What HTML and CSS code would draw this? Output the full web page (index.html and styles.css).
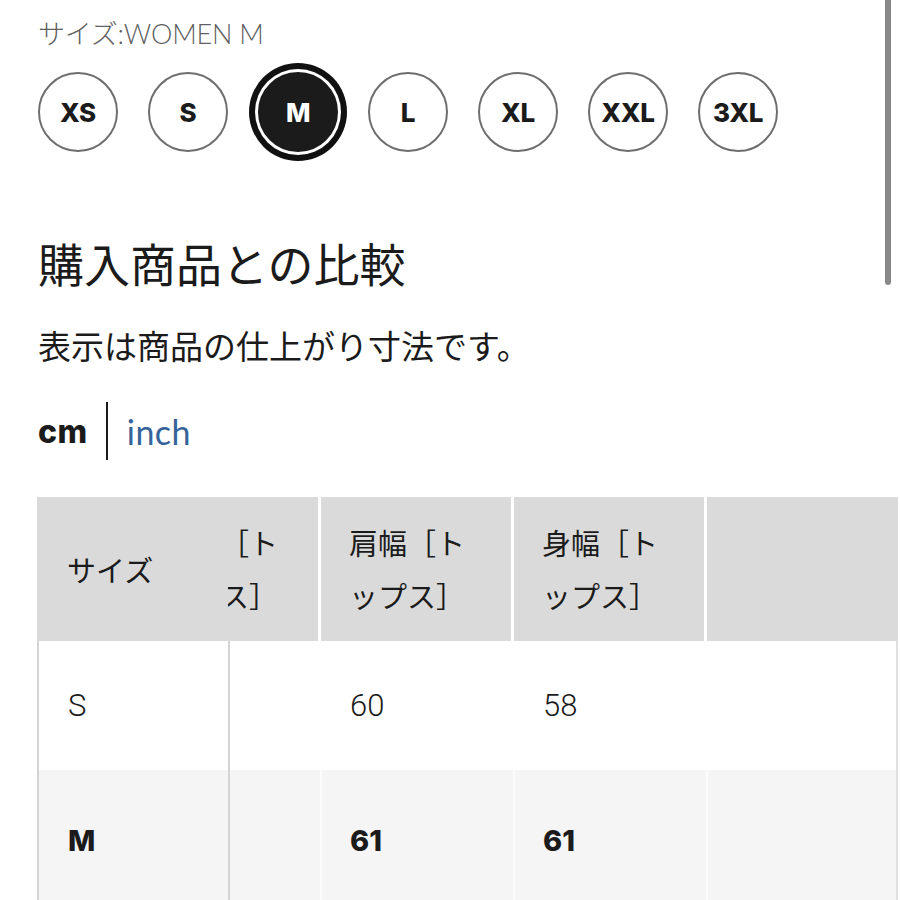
FILE: index.html
```html
<!DOCTYPE html>
<html lang="ja">
<head>
<meta charset="utf-8">
<title>サイズ比較</title>
<link rel="stylesheet" href="styles.css">
</head>
<body>
<div class="page">
  <div class="size-label">サイズ:WOMEN M</div>
  <div class="sizes">
    <span class="chip">XS</span>
    <span class="chip">S</span>
    <span class="chip chip-active">M</span>
    <span class="chip">L</span>
    <span class="chip">XL</span>
    <span class="chip">XXL</span>
    <span class="chip">3XL</span>
  </div>

  <h2 class="heading">購入商品との比較</h2>
  <p class="note">表示は商品の仕上がり寸法です。</p>

  <div class="units">
    <span class="unit unit-on">cm</span>
    <span class="unit-sep"></span>
    <span class="unit unit-off">inch</span>
  </div>

  <div class="table">
    <div class="row row-head">
      <div class="cell c1"><span>サイズ</span></div>
      <div class="cell c2"><div class="shifted">着丈［トップス］</div></div>
      <div class="cell c3 sep"><div class="wrap">肩幅［トップス］</div></div>
      <div class="cell c4 sep"><div class="wrap">身幅［トップス］</div></div>
      <div class="cell c5 sep"></div>
    </div>
    <div class="row row-body">
      <div class="cell c1 num">S</div>
      <div class="cell c2"></div>
      <div class="cell c3 num">60</div>
      <div class="cell c4 num">58</div>
      <div class="cell c5"></div>
    </div>
    <div class="row row-body row-current">
      <div class="cell c1 num">M</div>
      <div class="cell c2"></div>
      <div class="cell c3 sep num">61</div>
      <div class="cell c4 sep num">61</div>
      <div class="cell c5 sep"></div>
    </div>
  </div>
</div>
<div class="scrollbar"></div>
</body>
</html>
```

FILE: styles.css
```css
html, body {
  margin: 0;
  padding: 0;
  background: #ffffff;
}
body {
  font-family: "Noto Sans CJK JP", "Noto Sans", sans-serif;
  color: #1b1b1b;
  overflow: hidden;
  height: 900px;
}
.page {
  padding: 16px 0 0 38px;
}
.size-label {
  font-family: "Lato", "Noto Sans CJK JP", sans-serif;
  font-weight: 300;
  font-size: 27px;
  line-height: 36px;
  color: #5f5f5f;
  letter-spacing: -0.2px;
}
.sizes {
  display: flex;
  gap: 30px;
  margin-top: 20px;
}
.chip {
  width: 80px;
  height: 80px;
  box-sizing: border-box;
  border: 2px solid #6e6e6e;
  border-radius: 50%;
  display: flex;
  align-items: center;
  justify-content: center;
  font-family: "Inter", "Lato", sans-serif;
  font-weight: 800;
  font-size: 26px;
  letter-spacing: -0.3px;
  color: #1b1b1b;
}
.chip-active {
  background: #1b1b1b;
  border-color: #1b1b1b;
  color: #ffffff;
  box-shadow: 0 0 0 3px #ffffff, 0 0 0 9px #111111;
}
.heading {
  margin: 78px 0 0 0;
  font-weight: 400;
  font-size: 46px;
  line-height: 64px;
  color: #1b1b1b;
}
.note {
  margin: 28px 0 0 0;
  font-size: 33px;
  line-height: 46px;
  color: #1b1b1b;
}
.units {
  display: flex;
  align-items: center;
  height: 58px;
  margin-top: 34px;
}
.unit-on {
  font-family: "Inter", "Lato", sans-serif;
  font-weight: 800;
  font-size: 32px;
  color: #1b1b1b;
  letter-spacing: 0.5px;
}
.unit-sep {
  width: 2px;
  height: 58px;
  background: #1b1b1b;
  margin: 0 19px 0 18px;
}
.unit-off {
  font-family: "Lato", sans-serif;
  font-weight: 400;
  font-size: 34px;
  color: #35639a;
  letter-spacing: 0.5px;
}
.table {
  margin-top: 37px;
  margin-left: -1px;
  width: 861px;
}
.row {
  display: grid;
  grid-template-columns: 191px 90px 193px 193px 1fr;
}
.row-head {
  background: #dadada;
  height: 144px;
}
.row-body {
  height: 129px;
  background: #ffffff;
  border-left: 2px solid #d4d4d4;
  border-right: 2px solid #e0e0e0;
  box-sizing: border-box;
}
.row-current {
  background: #f5f5f5;
  height: 140px;
}
.cell {
  box-sizing: border-box;
  font-size: 29px;
  line-height: 53px;
  min-width: 0;
}
.row-head .c1 {
  display: flex;
  align-items: center;
  padding-left: 30px;
}
.row-head .c2 {
  overflow: hidden;
  padding-top: 19px;
}
.shifted {
  width: 134px;
  margin-left: -66px;
}
.row-head .sep {
  border-left: 3px solid #ffffff;
  padding: 19px 0 0 28px;
}
.wrap {
  width: 134px;
}
.row-body .c1 {
  border-right: 2px solid #d4d4d4;
  padding-left: 29px;
}
.row-body .cell {
  display: flex;
  align-items: center;
}
.row-body .c3,
.row-body .c4 {
  padding-left: 30px;
}
.row-current .sep {
  border-left: 2px solid #fbfbfb;
  padding-left: 28px;
}
.num {
  font-family: "Roboto", "Lato", sans-serif;
  font-weight: 300;
  font-size: 31px;
}
.row-current .num {
  font-family: "Inter", "Lato", sans-serif;
  font-weight: 800;
  font-size: 29px;
}
.scrollbar {
  position: fixed;
  top: 0;
  left: 885px;
  width: 6px;
  height: 285px;
  background: #888888;
  border-radius: 0 0 3px 3px;
}
```
